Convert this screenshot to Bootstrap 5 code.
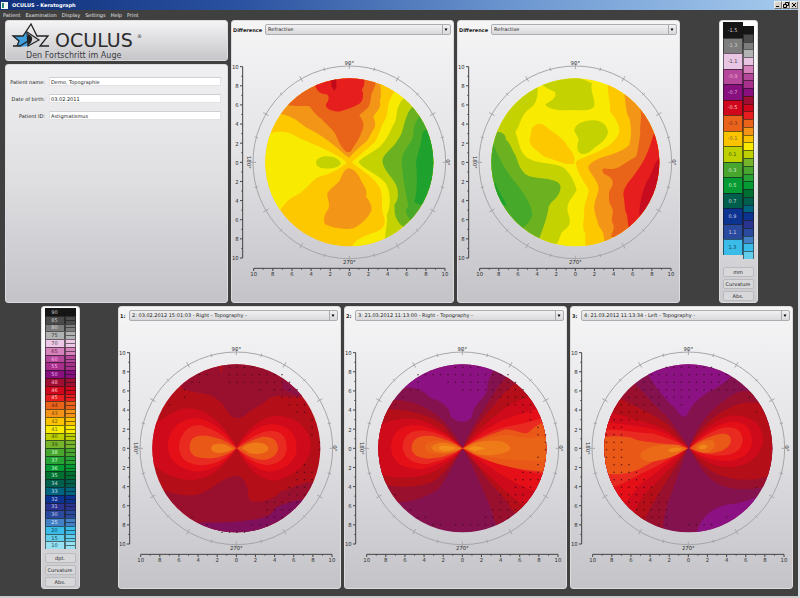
<!DOCTYPE html>
<html lang="en">
<head>
<meta charset="utf-8">
<meta name="viewport" content="width=device-width, initial-scale=1">
<title>OCULUS - Keratograph</title>
<link href="https://cdn.jsdelivr.net/npm/bootstrap@5.3.0/dist/css/bootstrap.min.css" rel="stylesheet">
<style>
  body { background: #404041; font: 5px/8px "DejaVu Sans", "Liberation Sans", sans-serif; color: #222; }
  .app-window { border-right: 2px solid #dcdfe3; border-bottom: 2px solid #c9cacc; }
  .title-strip { height: 10px; background: linear-gradient(90deg, #10307c, #2a52a0 30%, #6d97d0 65%, #a6cbee); color: #fff; font-weight: 700; }
  .win-btn { width: 8px; height: 8px; padding: 0; border: 1px solid #f0eee8; border-right-color: #777; border-bottom-color: #777; background: #d6d2ca; line-height: 0; }
  .win-btn svg { width: 6px; height: 6px; display: block; }
  .menu-strip { height: 10px; gap: 5px; padding-left: 3px; }
  .menu-strip a { color: #e4e4e4; text-decoration: none; }
  .work-area { padding: 0 5px 5px 5px; gap: 3px; }
  .work-row { display: grid; gap: 3px; }
  .row-top { grid-template-columns: 1fr 1fr 1fr 110px; }
  .row-bottom { grid-template-columns: 110px 1fr 1fr 1fr; }
  .left-stack { gap: 3px; }
  .pane { background: linear-gradient(#f5f5f6, #e4e4e7 45%, #c3c3c8); border: 1px solid #dcdcdf; border-radius: 3px; min-width: 0; }
  .brand-pane { height: 41px; background: linear-gradient(#f4f4f5, #c6c6ca); }
  .brand-pane svg { height: 39px; display: block; }
  .record-pane { background: linear-gradient(#f0f0f2, #dedee1 50%, #c3c3c8); padding: 12px 6px 12px 4px; }
  .record-form { gap: 8px; }
  .field-label { width: 35px; text-align: right; }
  .field-input { border: 1px solid #e2e2e4; border-top-color: #cfcfd2; background: #fff; height: 9px; padding: 0 1px; font-size: 5px; line-height: 7px; color: #222; min-width: 0; }
  .map-head { height: 15px; padding: 2px 2px 0 1px; gap: 3px; }
  .map-head label { font-weight: 700; min-width: 6px; }
  .map-select { appearance: none; height: 11px; border: 1px solid #aeaeb2; border-radius: 2px; padding: 0 9px 0 2px; font-size: 5px; line-height: 9px; color: #222; min-width: 0;
    background: url("data:image/svg+xml,%3Csvg xmlns='http://www.w3.org/2000/svg' viewBox='0 0 9 9'%3E%3Cpath d='M1.5 0v9' stroke='%23aaa'/%3E%3Cpath d='M3.500 3.500h3L5 6z'/%3E%3C/svg%3E") right center / 9px 9px no-repeat, linear-gradient(#f1f1f2, #d9d9dc); }
  .map-svg { width: 100%; display: block; font-size: 16px; fill: #333; }
  .axis-line { stroke: #444; stroke-width: 3; fill: none; }
  .ring-line { stroke: #a6a6a9; stroke-width: 3; fill: none; }
  .scale-pane { width: 39px; padding: 1px 3px; background: linear-gradient(#fff, #ececee 40%, #cbcbcf); }
  .scale-main { width: 20px; }
  .scale-fine { width: 11px; }
  .cell-main { border: 1px solid rgba(20,20,20,.6); border-bottom-width: 0; line-height: 5px; min-height: 0; }
  .cell-fine { border: 1px solid rgba(20,20,20,.55); border-bottom-width: 0; min-height: 0; }
  .unit-list { gap: 2px; }
  .unit-btn { height: 10px; padding: 0; border: 1px solid #bbbbbf; border-radius: 2px; background: #d8d8db; font-size: 5px; line-height: 8px; color: #222; }
</style>
</head>
<body>
<div class="app-window min-vh-100">
  <header>
    <div class="title-strip d-flex align-items-center justify-content-between">
      <div class="d-flex align-items-center gap-1">
        <svg width="8" height="7" viewBox="0 0 8 7" aria-hidden="true"><path fill="#f4f8f4" d="M1 0h7v7H1z"/><path fill="#2f8a72" d="M2 1h2v5H2z"/></svg>
        <span>OCULUS - Keratograph</span>
      </div>
      <div class="d-flex">
        <button class="win-btn" aria-label="Minimize"><svg viewBox="0 0 6 6"><path d="M1 4h3v1H1z"/></svg></button>
        <button class="win-btn" aria-label="Restore"><svg viewBox="0 0 6 6" fill="none" stroke="#000"><path d="M2.5 2V.5h3v3H4M.5 2.500h3v3h-3z"/></svg></button>
        <button class="win-btn" aria-label="Close"><svg viewBox="0 0 6 6" fill="none" stroke="#000"><path d="M1 1l4 4M5 1L1 5"/></svg></button>
      </div>
    </div>
    <nav class="menu-strip d-flex align-items-center" aria-label="Main menu">
      <a href="#">Patient</a><a href="#">Examination</a><a href="#">Display</a><a href="#">Settings</a><a href="#">Help</a><a href="#">Print</a>
    </nav>
  </header>

  <main class="work-area d-grid">
    <div class="work-row row-top">
      <div class="left-stack d-flex flex-column">
        <div class="pane brand-pane">
          <svg viewBox="0 0 221 39" aria-label="OCULUS, Den Fortschritt im Auge">
            <path d="M7 15h10l4-5 1 15-8 1-3-1 2-5z" fill="#3f9fdc"/>
            <path d="M7 25h7l8-5M11 25l2-5-6-5h10L25 3l6 12h11l-8 10h9" fill="none" stroke="#222" stroke-width="1.300"/>
            <path d="M21 11l12 8-11 6z" fill="#d2d2d6" stroke="#222" stroke-width="1.200"/>
            <path d="M22 13q5 2 4 6t-4 5z" fill="#222"/>
            <text x="49" y="26" font-size="19" fill="#2b2b2d">OCULUS</text>
            <text x="131" y="17" font-size="5" fill="#2b2b2d">®</text>
            <text x="20" y="37" font-size="8" fill="#3c3c3f">Den Fortschritt im Auge</text>
          </svg>
        </div>
        <div class="pane record-pane flex-grow-1">
          <form class="record-form d-flex flex-column">
            <div class="d-flex align-items-center gap-1"><label class="field-label text-nowrap" for="pname">Patient name:</label><input class="field-input flex-grow-1" id="pname" value="Demo, Topographie"></div>
            <div class="d-flex align-items-center gap-1"><label class="field-label text-nowrap" for="pbirth">Date of birth:</label><input class="field-input flex-grow-1" id="pbirth" value="03.02.2011"></div>
            <div class="d-flex align-items-center gap-1"><label class="field-label text-nowrap" for="pid">Patient ID:</label><input class="field-input flex-grow-1" id="pid" value="Astigmatismus"></div>
          </form>
        </div>
      </div>

      <section class="pane">
        <div class="map-head d-flex align-items-center"><label for="sel-a">Difference</label><select class="map-select flex-grow-1" id="sel-a"><option>Refractive</option></select></div>
        <svg class="map-svg" viewBox="-352 -379 663 798">
          <g clip-path="url(#disc)"><g transform="translate(-358 -442)">
            <path fill="#fdc800" d="M90 180h540v540H90z"/>
            <path fill="#f8ea00" d="M90 368C130 345 170 345 200 365C240 385 290 400 335 430L350 443C320 470 290 478 260 488C235 510 210 540 190 545C165 560 160 575 150 585L90 600z"/>
            <path fill="#c3d200" d="M258 440C262 425 290 420 310 426C325 432 333 440 332 448C322 460 300 462 280 460C265 457 257 452 258 440"/>
            <path fill="#f39617" d="M140 295C180 300 200 315 225 335C265 355 310 385 345 420L358 428C370 412 390 395 408 380C415 375 420 360 430 345C440 330 435 320 430 305C440 290 452 280 450 265C448 245 460 235 465 210L400 150 150 200z"/>
            <path fill="#e96419" d="M165 268C200 278 225 270 240 275C248 290 265 305 275 312C285 325 305 340 315 355C325 375 330 395 350 412L362 410C370 395 390 370 395 350C405 330 400 318 388 300C400 290 415 280 418 270C425 255 420 240 430 225C435 215 438 205 437 195L380 150 170 200z"/>
            <path fill="#e61e1e" d="M254 205C258 225 268 238 290 238C300 245 296 258 288 268C285 280 300 288 325 290C350 285 375 275 390 265C400 255 402 235 395 225C403 215 405 200 402 190L340 170z"/>
            <path fill="#c00a1a" d="M303 195L318 192 320 215 313 228 305 215z"/>
            <path fill="#f39617" d="M358 460C370 462 385 475 395 500C408 520 412 530 408 545C420 560 428 575 424 588C410 615 390 630 370 640C345 645 310 640 285 628C278 610 285 595 295 582C302 565 290 550 292 535C305 515 325 505 330 495C338 475 345 460 358 460"/>
            <path fill="#f8ea00" d="M365 442C395 415 420 395 435 380C450 355 452 335 462 320C478 295 470 270 482 250Q488 230 510 215L700 300V720H368V690C380 670 410 660 440 650C462 640 468 625 462 605C450 580 462 550 450 520C435 490 400 470 365 442"/>
            <path fill="#fdc800" d="M450 205C455 225 450 240 455 255L482 250Q488 230 500 212L470 190z"/>
            <path fill="#c3d200" d="M385 440C400 425 430 410 450 395C470 375 480 350 490 330C505 310 495 290 508 268Q512 255 540 235L700 400 600 700 467 690C460 655 475 635 470 600C485 570 480 530 470 510C455 480 400 465 385 440"/>
            <path fill="#6cb220" d="M457 437C460 415 490 400 503 375C520 355 520 330 528 310C535 290 540 280 555 270L650 400 540 650 510 628C490 600 495 590 493 570C505 555 505 540 502 520C495 490 460 470 457 437"/>
            <path fill="#46a92a" d="M515 437C518 400 545 390 550 360C550 330 560 310 580 290L650 400 560 640 545 620C530 600 520 585 535 575C530 540 518 500 515 437"/>
            <path fill="#1fa12e" d="M558 445C560 420 575 390 578 350Q588 338 605 345L640 440 600 570Q560 570 553 560C562 530 562 480 558 445"/>
          </g></g>
        </svg>
      </section>

      <section class="pane">
        <div class="map-head d-flex align-items-center"><label for="sel-b">Difference</label><select class="map-select flex-grow-1" id="sel-b"><option>Refractive</option></select></div>
        <svg class="map-svg" viewBox="-352 -379 663 798">
          <g clip-path="url(#disc)"><g transform="translate(-358 -442)">
            <path fill="#f8ea00" d="M90 180h540v540H90z"/>
            <path fill="#c3d200" d="M245 200V235C240 262 240 268 215 285C190 310 195 330 178 350C190 385 190 405 210 425C240 450 300 440 325 460C345 480 355 500 362 525C350 550 330 560 335 590C345 620 345 630 325 645C310 655 315 670 300 690L80 700V200z"/>
            <path fill="#6cb220" d="M100 346C145 350 150 360 150 375C165 385 165 400 178 420C190 450 195 480 230 486C260 492 310 490 314 515C312 550 285 555 278 575C275 600 265 630 250 670L80 650z"/>
            <path fill="#46a92a" d="M105 370C125 420 145 465 180 505C205 535 240 590 225 610Q220 622 200 640L80 600z"/>
            <path fill="#1fa12e" d="M118 500C125 530 145 550 152 572L110 560z"/>
            <path fill="#c3d200" d="M256 208C270 220 285 225 298 232C302 250 285 258 268 268C275 285 320 288 345 285C375 285 400 290 414 275C420 250 400 230 408 205L350 180 280 190z"/>
            <path fill="#c3d200" d="M355 345C358 325 385 318 410 316C435 315 455 330 456 352C450 375 435 385 415 398C400 415 385 420 372 415C362 405 362 395 368 375C365 360 355 355 355 345"/>
            <path fill="#fdc800" d="M228 340C245 320 255 325 270 335C295 355 325 370 335 395C350 410 362 430 352 447C320 450 290 430 265 425C240 405 215 390 222 370z"/>
            <path fill="#fdc800" d="M455 195C455 250 465 265 462 290C480 310 490 330 490 350C480 385 440 405 400 420C385 430 365 432 359 442C365 480 385 500 398 525C395 555 380 570 385 600C380 630 380 645 388 655V700H700V195z"/>
            <path fill="#f39617" d="M503 225C510 260 508 290 520 310C528 340 525 370 520 390C500 410 460 420 430 430C410 440 395 450 397 460C405 480 425 495 428 520C425 545 412 560 415 585C420 610 425 615 425 625C430 640 445 645 445 680L700 700V225z"/>
            <path fill="#e96419" d="M552 275C560 310 550 330 553 350C550 380 545 410 540 425C500 445 490 465 455 462C432 455 435 475 455 482C470 490 475 500 465 520C455 530 460 555 460 565C480 590 465 600 468 620Q480 635 465 665L700 700V275z"/>
            <path fill="#e61e1e" d="M595 350C580 400 570 430 545 465C530 490 500 515 502 540C508 570 505 585 513 600L518 640 700 600V360z"/>
            <path fill="#c60c1e" d="M612 425C590 450 588 480 572 500C560 530 550 560 550 600H640V425z"/>
          </g></g>
        </svg>
      </section>

      <aside class="pane scale-pane mx-auto d-flex flex-column" data-scale="difference" aria-label="Difference scale"></aside>
    </div>

    <div class="work-row row-bottom">
      <aside class="pane scale-pane mx-auto d-flex flex-column" data-scale="curvature" aria-label="Curvature scale"></aside>

      <section class="pane">
        <div class="map-head d-flex align-items-center"><label for="sel-1">1:</label><select class="map-select flex-grow-1" id="sel-1"><option>2: 03.02.2012 15:01:03 - Right - Topography -</option></select></div>
        <svg class="map-svg" viewBox="-352 -379 663 798" data-dots="first">
          <g clip-path="url(#disc)"><g transform="translate(-359 -445)">
            <path fill="#b40f18" d="M90 180h540v540H90z"/>
            <path fill="#99102f" d="M180 250Q200 270 225 275C260 280 290 280 320 315C335 340 345 355 360 355C385 355 390 335 420 322C450 305 460 285 490 288L550 292 620 260 360 150 180 200z"/>
            <path fill="#b40f18" d="M305 192h14l-5 30z"/>
            <path fill="#861254" d="M495 240L500 268 545 290 560 275z" opacity=".6"/>
            <path fill="#99102f" d="M120 560C160 580 200 590 240 585C290 570 315 530 358 527C385 530 395 560 397 600C420 612 470 600 490 575C530 565 560 540 610 545V700H100z"/>
            <path fill="#80105c" d="M240 668C300 668 350 668 400 660C450 655 465 645 475 625C500 610 530 605 565 595L520 720H230z"/>
            <path fill="#cf0a1b" d="M95 375C140 365 165 330 210 325C270 325 320 370 360 443C330 490 290 535 230 540C170 540 130 515 95 480zM360 443C385 395 430 350 480 348C540 348 585 390 582 440C580 490 530 530 475 542C420 540 390 500 360 443"/>
            <path fill="#e50f17" d="M153 440C155 385 195 355 240 355C290 360 330 400 360 443C330 490 280 515 235 515C185 505 155 480 153 440M540 445C540 395 510 375 465 372C420 375 385 410 360 444C390 490 430 515 460 515C510 510 540 480 540 445"/>
            <path fill="#e92a20" d="M187 440C190 395 225 365 265 380C310 395 335 420 360 444C330 475 290 500 245 495C205 490 187 470 187 440M510 443C510 405 490 390 455 393C415 400 385 425 360 445C390 475 420 495 455 495C490 490 510 470 510 443"/>
            <path fill="#ea5818" d="M219 440C220 410 240 405 275 408C315 415 340 430 358 445C335 465 300 478 265 475C235 472 219 465 219 440M484 445C483 420 465 408 435 411C405 420 380 432 362 445C385 465 410 478 440 480C465 478 483 465 484 445"/>
            <path fill="#ee7a18" d="M283 444C285 430 310 428 330 435L350 446C330 458 310 460 300 458Q283 455 283 444M375 445C390 430 410 425 430 428C450 432 457 440 455 450C445 462 420 465 400 460z"/>
          </g></g>
        </svg>
      </section>

      <section class="pane">
        <div class="map-head d-flex align-items-center"><label for="sel-2">2:</label><select class="map-select flex-grow-1" id="sel-2"><option>3: 21.03.2012 11:13:00 - Right - Topography -</option></select></div>
        <svg class="map-svg" viewBox="-352 -379 663 798" data-dots="second">
          <g clip-path="url(#disc)"><g transform="translate(-359 -445)">
            <path fill="#84124f" d="M90 180h540v540H90z"/>
            <path fill="#8c1283" d="M180 262C220 260 240 270 265 295C300 305 320 320 325 350C345 370 375 370 388 350C388 320 420 300 435 270C430 240 450 225 454 200L360 150 180 200z"/>
            <path fill="#99102f" d="M120 302C200 290 260 325 300 360C320 380 345 415 360 445C340 480 320 520 290 565C260 590 200 610 150 608L80 560zM360 445C375 400 410 350 440 300C460 270 480 240 505 215L640 300V600L465 690C445 630 445 620 425 580C405 530 380 480 360 445"/>
            <path fill="#b40f18" d="M100 328C200 325 260 345 300 375L360 445C335 480 310 520 270 545C230 560 180 565 135 555L60 500zM360 445C390 395 420 350 455 315C480 280 500 265 540 235L640 300V550L520 640C500 625 500 610 480 590C440 550 400 490 360 445"/>
            <path fill="#cf0a1b" d="M95 380C150 355 200 350 250 365C295 385 330 415 360 445C330 485 290 510 250 525C200 535 150 535 105 520zM360 445C400 400 430 365 470 340C500 310 530 300 580 285L640 350V560L550 620C490 580 420 510 360 445"/>
            <path fill="#e50f17" d="M145 443C148 390 180 375 225 375C285 385 330 415 360 445C330 475 290 495 240 508C180 505 148 490 145 443M360 445C400 410 430 385 480 360C530 345 560 330 600 325L640 400V560L585 575C520 560 440 500 360 445"/>
            <path fill="#e92a20" d="M180 440C182 400 210 388 250 392C300 400 335 425 360 445C330 470 290 485 250 493C210 490 182 475 180 440M360 445C400 415 440 395 490 380C530 375 560 365 610 352L640 400V525C550 520 440 490 360 445"/>
            <path fill="#ea5818" d="M207 441C210 415 230 405 270 408Q325 420 360 445C330 465 290 475 255 476C225 472 207 465 207 441M360 445C400 420 440 405 490 388C530 390 545 408 560 395C575 380 590 370 610 365L640 400V515C580 515 550 510 500 500C450 490 400 470 360 445"/>
            <path fill="#ea6418" d="M247 443C250 420 290 418 330 430L358 445C330 462 290 465 270 460Q247 455 247 443M362 445C400 425 450 405 500 405C550 420 570 410 620 410V480C540 485 420 480 362 445"/>
            <path fill="#ee7a18" d="M265 443C280 425 310 425 335 436L355 446C330 458 300 462 275 454zM368 445C390 425 430 420 470 423C495 428 505 440 503 450C480 465 430 470 400 462z"/>
            <path fill="#f3921a" d="M288 443C292 433 320 435 340 444C320 455 290 455 288 443M375 446L395 438 430 445 395 453z"/>
          </g></g>
        </svg>
      </section>

      <section class="pane">
        <div class="map-head d-flex align-items-center"><label for="sel-3">3:</label><select class="map-select flex-grow-1" id="sel-3"><option>4: 21.03.2012 11:13:34 - Left - Topography -</option></select></div>
        <svg class="map-svg" viewBox="-352 -379 663 798" data-dots="third">
          <g clip-path="url(#disc)"><g transform="translate(-359 -445)">
            <path fill="#84124f" d="M90 180h540v540H90z"/>
            <path fill="#8c1283" d="M235 220C260 260 290 300 320 325C335 350 345 355 355 345C370 310 400 285 440 265C465 250 480 240 495 220L360 150 230 190zM380 710C395 650 430 625 470 615C510 610 540 605 575 585V640L450 720z"/>
            <path fill="#99102f" d="M190 245C230 280 250 310 290 345C320 380 345 415 358 440C340 490 320 550 300 600C290 640 280 660 285 700L60 640V250zM362 440C380 390 420 330 470 300C500 275 530 262 570 285L640 300V545L590 560C500 580 440 560 410 520C385 490 370 460 362 440"/>
            <path fill="#b40f18" d="M145 290C200 320 260 345 300 375L358 442C330 490 280 560 260 600C240 630 230 650 225 680L60 600V290zM362 443C385 390 440 340 490 320C530 300 570 305 595 320L640 400 610 525C570 540 520 545 470 530C420 520 385 480 362 443"/>
            <path fill="#cf0a1b" d="M110 332C180 355 250 365 300 395L358 443C320 490 270 540 240 570C215 600 205 610 195 650L60 600zM362 444C390 400 430 365 480 348C540 340 585 370 583 425C575 475 530 500 480 502C430 500 390 475 362 444"/>
            <path fill="#e50f17" d="M100 365C170 375 240 375 300 405L358 444C310 480 260 520 220 550C200 570 185 590 165 615L60 560zM550 425C550 385 530 365 490 365C440 370 395 410 362 445C390 470 440 485 480 483C530 475 548 455 550 425"/>
            <path fill="#e92a20" d="M100 390C160 385 200 400 250 400C300 415 340 430 358 445C310 470 270 500 220 520C180 540 160 555 135 560L60 540zM522 420C520 390 500 380 470 382C430 390 390 420 362 445C400 465 440 470 475 465C505 460 520 445 522 420"/>
            <path fill="#ea5818" d="M100 415C130 405 160 410 190 413C210 430 300 425 358 445C310 465 260 480 225 500C190 520 150 527 105 520L60 500zM487 420C485 400 465 398 440 405C410 415 380 430 364 445C400 465 430 462 460 452C480 442 487 432 487 420"/>
            <path fill="#ea6a18" d="M215 462C230 440 280 430 330 435L355 446C320 470 270 485 240 485Q213 480 215 462M380 443C385 428 410 418 430 420C445 430 440 445 420 455C400 460 380 455 380 443"/>
            <path fill="#f0851a" d="M298 452C305 442 325 440 342 447C325 458 305 460 298 452M388 443C395 432 410 430 418 438C412 450 395 452 388 443"/>
          </g></g>
        </svg>
      </section>
    </div>
  </main>
</div>

<svg width="0" height="0" class="position-absolute" aria-hidden="true"><clipPath id="disc"><circle r="252"/></clipPath></svg>

<script src="https://cdn.jsdelivr.net/npm/bootstrap@5.3.0/dist/js/bootstrap.bundle.min.js"></script>
<script>
  // Axes, angle ring and labels shared by every map
  const STEP = 28.7;
  function axes() {
    let line = 'M-320 -287V287M-287 318H287', ring = '', text = '';
    for (let i = -10; i <= 10; i++) {
      const p = i * STEP, even = i % 2 === 0;
      line += `M-320 ${p}h${even ? -8 : -4}M${p} 318v${even ? 8 : 4}`;
      if (even) {
        text += `<text x="-332" y="${p + 7}" text-anchor="end">${Math.abs(i)}</text>`;
        text += `<text x="${p}" y="341" text-anchor="middle">${Math.abs(i)}</text>`;
      }
    }
    for (let a = 0; a < 360; a += 15) {
      const long = a % 30 === 0 ? 9 : 5, c = Math.cos(a * Math.PI / 180), s = Math.sin(a * Math.PI / 180);
      ring += `M${(289 - long) * c} ${(289 - long) * s}L${(289 + long) * c} ${(289 + long) * s}`;
    }
    return `<circle class="ring-line" r="289"/><path class="ring-line" d="${ring}"/><path class="axis-line" d="${line}"/>${text}
      <text y="-291" text-anchor="middle">90°</text><text y="306" text-anchor="middle">270°</text>
      <text transform="translate(-302 0) rotate(90)" y="5" text-anchor="middle">180°</text>
      <text transform="translate(296 0) rotate(90)" y="5" text-anchor="middle">0°</text>`;
  }
  // Extrapolated sample points: grid row, then first and last column of each run
  const DOTS = {
    first: [[-11,-1,2],[-10,-5,-4],[-10,-1,6],[-9,-6,-5],[-9,-1,7],[-8,-7,-7],[-8,3,3],[-8,5,8],[-7,-7,-7],[-7,6,8],[-6,-9,-9],[-6,7,9],[-5,8,9],[-4,10,10],[-3,10,10],[-2,10,10],[-1,11,11],[0,11,11],[2,9,9],[3,8,10],[4,8,10],[5,7,9],[6,7,9],[7,4,8],[8,4,7],[9,-6,-6],[9,4,6],[10,-4,-4],[10,2,4],[11,-2,1]],
    second: [[-11,-1,2],[-10,-6,6],[-9,-6,-6],[-9,-2,7],[-8,-7,-6],[-8,0,8],[-7,-8,-8],[-7,4,8],[-6,-9,-9],[-6,6,9],[-5,8,9],[-4,9,9],[-3,10,10],[-2,10,11],[-1,11,11],[0,11,11],[1,10,10],[2,10,10],[3,8,10],[4,7,10],[5,7,9],[6,-9,-9],[6,5,8],[7,5,8],[8,-7,-7],[8,4,7],[9,-6,-5],[9,3,6],[10,-4,-3],[10,-1,4]],
    third: [[-11,-3,3],[-10,-5,5],[-9,-6,6],[-8,-7,7],[-7,-8,0],[-7,8,8],[-6,-9,-4],[-6,-1,-1],[-5,-9,-6],[-5,9,9],[-4,-10,-7],[-3,-10,-9],[-2,-11,-9],[-1,-11,-9],[0,-11,-9],[1,-11,-9],[2,-10,-8],[3,-10,-7],[4,-10,-6],[5,-9,-5],[5,9,9],[6,-9,-4],[7,-8,-3],[8,-7,-3],[9,-6,-3],[9,5,5],[10,-4,-3],[10,0,3]]
  };
  document.querySelectorAll('.map-svg').forEach(svg => {
    let d = '';
    (DOTS[svg.dataset.dots] || []).forEach(([row, a, b]) => {
      for (let k = a; k <= b; k++) d += `M${k * 22.5} ${row * 22.5 + 3}h4v3h-4z`;
    });
    svg.insertAdjacentHTML('beforeend', axes() + (d ? `<path fill="#3a0a1c" d="${d}"/>` : ''));
  });

  // Colour scales: label, colour, text colour
  const SCALES = {
    difference: {
      main: [['-1.5','#161616','#ccc'],['-1.3','#7d7d7d','#ccc'],['-1.1','#e9c5e4','#444'],['-0.9','#b6489b','#eac'],['-0.7','#870f7e','#dad'],['-0.5','#d0061c','#fcc'],['-0.3','#e9641a','#732'],['-0.1','#fcc400','#764'],['0.1','#bfd000','#450'],['0.3','#48a52e','#cec'],['0.5','#059a34','#cec'],['0.7','#005f4c','#cdd'],['0.9','#0d3391','#cce'],['1.1','#2a4a9d','#cce'],['1.3','#3abbe8','#145']],
      fine: ['#161616','#4b4b4b','#7d7d7d','#b1b3b2','#e9c5e4','#d682bb','#b6489b','#a8308c','#870f7e','#a00e33','#d0061c','#e71d1f','#e9641a','#f39317','#fcc400','#f8ea00','#bfd000','#76b52b','#48a52e','#27a336','#059a34','#007032','#005f4c','#00647f','#0d3391','#2b3390','#2a4a9d','#4380c5','#3abbe8','#63cdec'],
      units: ['mm', 'Curvature', 'Abs.'], staggered: true
    },
    curvature: {
      main: [['90','#161616','#ccc'],['85','#4b4b4b','#ccc'],['80','#7d7d7d','#ddd'],['75','#b1b3b2','#333'],['70','#ecc8e6','#444'],['65','#d682bb','#624'],['60','#b6489b','#fbe'],['55','#a8308c','#fbe'],['50','#870f7e','#ebe'],['48','#a00e33','#fbc'],['46','#d0061c','#fcc'],['45','#e71d1f','#fcc'],['44','#e9641a','#621'],['43','#f39317','#741'],['42','#fcc400','#752'],['41','#f8ea00','#664'],['40','#bfd000','#450'],['39','#76b52b','#341'],['38','#48a52e','#cfc'],['37','#27a336','#cfc'],['36','#059a34','#cfc'],['35','#007032','#cec'],['34','#005f4c','#cdd'],['33','#00647f','#cde'],['32','#0d3391','#cce'],['31','#2b3390','#cce'],['30','#2a4a9d','#cce'],['25','#4380c5','#def'],['20','#3abbe8','#145'],['15','#63cdec','#145'],['10','#96e2f2','#145']],
      units: ['dpt.', 'Curvature', 'Abs.'], staggered: false
    }
  };
  SCALES.curvature.fine = SCALES.curvature.main.flatMap(c => [c[1], c[1]]);
  document.querySelectorAll('[data-scale]').forEach(el => {
    const s = SCALES[el.dataset.scale];
    const main = s.main.map(c => `<div class="cell-main flex-fill d-flex align-items-center justify-content-center" style="background:${c[1]};color:${c[2]}">${c[0]}</div>`).join('');
    const fine = s.fine.map(c => `<div class="cell-fine flex-fill" style="background:${c}"></div>`).join('');
    el.innerHTML = `<div class="d-flex flex-grow-1 mb-${s.staggered ? 2 : 1}">
      <div class="scale-main d-flex flex-column ${s.staggered ? 'mb-1' : ''}">${main}</div>
      <div class="scale-fine d-flex flex-column ${s.staggered ? 'mt-1' : ''}">${fine}</div></div>
      <div class="unit-list d-flex flex-column">${s.units.map(u => `<button class="unit-btn">${u}</button>`).join('')}</div>`;
  });
</script>
</body>
</html>
